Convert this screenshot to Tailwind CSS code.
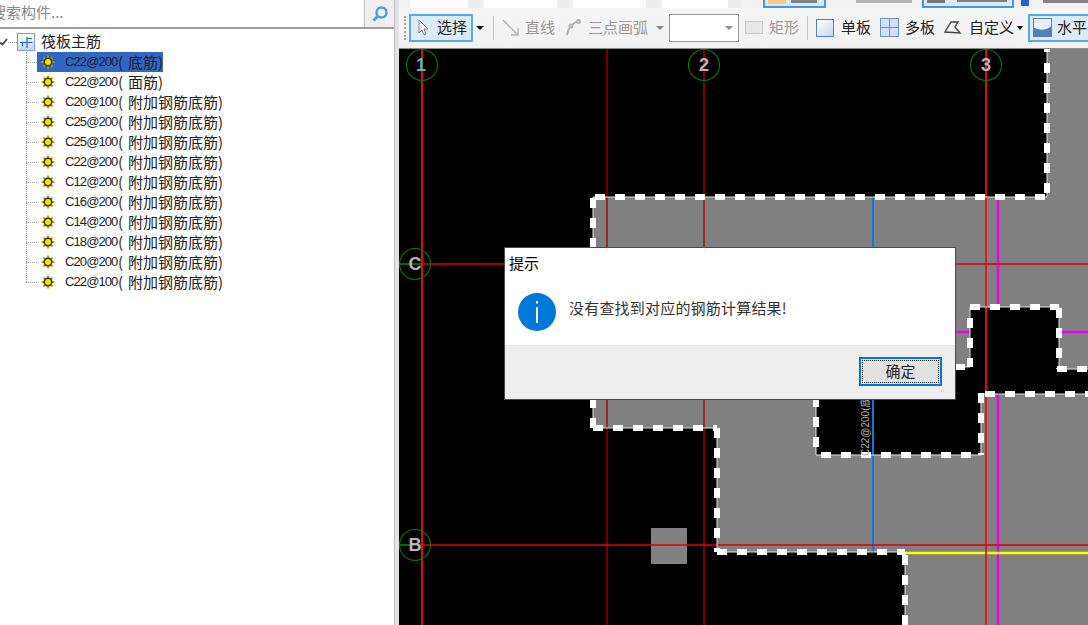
<!DOCTYPE html>
<html lang="en">
<head>
    <meta charset="UTF-8">
    <title>筏板主筋</title>
    <script src="https://cdn.jsdelivr.net/npm/@tailwindcss/browser@4"></script>
</head>
<body class="bg-white overflow-hidden font-['Noto_Sans_CJK_SC',sans-serif]">

<svg class="hidden">
    <symbol id="gear" viewBox="0 0 14 14">
        <g stroke="#b8a800" stroke-width="2">
            <path d="M7 .5v13M.5 7h13M2.500 2.500l9 9M11.500 2.500l-9 9"/>
        </g>
        <circle cx="7" cy="7" r="4.500" fill="#3a3500"/>
        <circle cx="7" cy="7" r="3" fill="#f5e400"/>
    </symbol>
</svg>

<div class="flex w-[1088px] h-[625px]">
    <!-- left panel -->
    <aside class="w-[394px] shrink-0 flex flex-col overflow-hidden">
        <div class="flex h-[29px] shrink-0 border-b-2 border-[#a0a0a0]">
            <div class="flex-1 h-[27px] overflow-hidden border-r border-[#c8c8c8] text-[15px] leading-[23px] text-[#8a8a8a] whitespace-nowrap"><span class="block -ml-[9px]">搜索构件...</span></div>
            <div class="w-[29px] bg-[#eeeeee] flex items-center justify-center">
                <svg width="18" height="18" viewBox="0 0 18 18" fill="none"><circle cx="10.500" cy="7.500" r="5" stroke="#4a9fe0" stroke-width="2.400"/><path d="M7 11l-4.500 4.500" stroke="#4a9fe0" stroke-width="3"/></svg>
            </div>
        </div>

        <div class="flex items-center h-[20px] mt-[3px] shrink-0 relative">
            <svg width="8" height="8" viewBox="0 0 8 8" fill="none"><path d="M0 4.500l2.500 2L7 1" stroke="#444" stroke-width="1.800"/></svg>
            <span class="w-[9px] border-t border-dotted border-[#999]"></span>
            <svg width="18" height="18" viewBox="0 0 18 18" fill="none">
                <defs><linearGradient id="rootFill" x1="0" y1="0" x2="0" y2="1"><stop offset="0" stop-color="#ffffff"/><stop offset="1" stop-color="#c4d6f4"/></linearGradient></defs>
                <rect x=".5" y=".5" width="17" height="17" fill="url(#rootFill)" stroke="#7f9fdc"/>
                <path d="M3 9.500h12.500M10 4v11M10 5.500h5M5.500 9.500v4" stroke="#2a62c8" stroke-width="1.200"/>
            </svg>
            <span class="ml-[6px] -mt-[3px] text-[15px] text-[#222] leading-none">筏板主筋</span>
        </div>

        <ul id="tree" class="relative ml-[26px] mt-0"></ul>
    </aside>

    <div class="w-[5px] shrink-0 bg-[#e2e2e2] border-l border-[#bdbdbd]"></div>

    <!-- right side -->
    <main class="flex-1 flex flex-col min-w-0">
        <div class="h-[49px] shrink-0 bg-[#f1f1f1] border-b border-[#8c8c8c] overflow-hidden">
            <div class="flex h-[8px] items-start text-[14px] leading-[8px]">
                <div class="ml-[11px] w-[72px] h-[8px] bg-white"><div class="ml-[58px] h-full bg-[#ededed]"></div></div>
                <div class="ml-[3px] w-[87px] h-[8px] bg-white"><div class="ml-[73px] h-full bg-[#ededed]"></div></div>
                <div class="ml-[3px] w-[87px] h-[8px] bg-white"><div class="ml-[73px] h-full bg-[#ededed]"></div></div>
                <div class="ml-[3px] w-[80px] h-[8px] bg-white"><div class="ml-[66px] h-full bg-[#ededed]"></div></div>
                <div class="ml-[22px] w-[64px] h-[8px] bg-[#dce9f5] border-x-2 border-b-2 border-[#3c9be8] flex"><span class="ml-[3px] w-[18px] h-[4px] bg-[#f8c98a]"></span><span class="ml-[5px] w-[26px] h-[3px] bg-[#555]/70"></span></div>
                <div class="ml-[30px] w-[56px] h-[3px] bg-[#8a8a8a]/60"></div>
                <div class="ml-[10px] w-[93px] h-[8px] bg-[#dce9f5] border-x-2 border-b-2 border-[#3c9be8] flex"><span class="ml-[3px] w-[18px] h-[3px] bg-[#777]"></span><span class="ml-[12px] w-[50px] h-[2px] bg-[#555]/70"></span></div>
                <div class="ml-[7px] w-[8px] h-[6px] bg-[#2a62c8]"></div>
                <div class="ml-[14px] w-[46px] h-[3px] bg-[#555]/70"></div>
            </div>

            <div class="flex items-center h-[41px] pt-[3px] pb-[5px] bg-linear-to-b from-[#f6f6f6] to-[#f1f1f1] text-[15px] text-[#222] whitespace-nowrap">
                <div class="ml-[5px] w-[3px] h-[24px] border-l-2 border-dotted border-[#aaa]"></div>
                <div class="ml-[2px] w-[64px] h-[28px] flex items-center border-2 border-[#5aa7ea] bg-[#dcebf8]">
                    <svg class="ml-[6px]" width="12" height="18" viewBox="0 0 12 18" fill="#f4f4f4" stroke="#888"><path d="M2 1v13l3-3 2 5 2-1-2-5h4z"/></svg>
                    <span class="ml-[8px]">选择</span>
                </div>
                <span class="ml-[3px] w-0 h-0 border-x-[4px] border-x-transparent border-t-[4px] border-t-[#111]"></span>
                <span class="ml-[9px] w-px h-[24px] bg-[#c4c4c4]"></span>
                <svg class="ml-[8px]" width="18" height="18" viewBox="0 0 18 18" fill="none" stroke="#b5b5b5" stroke-width="1.500"><path d="M1 1l15 15M16 9v7H9"/></svg>
                <span class="ml-[5px] text-[#9a9a9a]">直线</span>
                <svg class="ml-[10px]" width="16" height="18" viewBox="0 0 16 18" fill="none" stroke="#b5b5b5" stroke-width="2"><path d="M2 16C3 9 7 4 14 2"/><circle cx="13.500" cy="2.500" r="1.500" fill="#ccc"/><circle cx="6" cy="7" r="1.500" fill="#ccc"/></svg>
                <span class="ml-[7px] text-[#9a9a9a]">三点画弧</span>
                <span class="ml-[8px] w-0 h-0 border-x-[4px] border-x-transparent border-t-[4px] border-t-[#888]"></span>
                <div class="ml-[5px] w-[70px] h-[28px] flex items-center justify-end pr-[5px] bg-white border border-[#9a9a9a]">
                    <span class="w-0 h-0 border-x-[4px] border-x-transparent border-t-[4px] border-t-[#888]"></span>
                </div>
                <span class="ml-[6px] w-[18px] h-[13px] bg-[#e8e8e8] border border-[#c8c8c8]"></span>
                <span class="ml-[6px] text-[#9a9a9a]">矩形</span>
                <span class="ml-[8px] w-px h-[24px] bg-[#c4c4c4]"></span>
                <span class="ml-[8px] w-[18px] h-[18px] bg-linear-to-br from-white to-[#c8d8f2] border border-[#4f7fd0]"></span>
                <span class="ml-[7px]">单板</span>
                <svg class="ml-[9px]" width="19" height="19" viewBox="0 0 19 19" fill="#cfe0f4" stroke="#6e93c8"><rect x=".5" y=".5" width="18" height="18"/><path d="M9.500 0v19M0 9.500h19"/></svg>
                <span class="ml-[6px]">多板</span>
                <svg class="ml-[9px]" width="18" height="16" viewBox="0 0 18 16" fill="none" stroke="#444" stroke-width="1.400"><path d="M1 12L7 2h7l-3 5 5 6z"/></svg>
                <span class="ml-[7px]">自定义</span>
                <span class="ml-[3px] w-0 h-0 border-x-[3px] border-x-transparent border-t-[4px] border-t-[#111]"></span>
                <div class="ml-[5px] flex-1 h-[28px] flex items-center border-y-2 border-l-2 border-[#5aa7ea] bg-[#dcebf8]">
                    <svg class="ml-[3px]" width="19" height="19" viewBox="0 0 19 19" fill="#e6eef8" stroke="#5f7fae"><rect x=".5" y=".5" width="18" height="18"/><path d="M1 10c5 3 12 3 17-1v9H1z" fill="#4f7fc0"/></svg>
                    <span class="ml-[5px]">水平</span>
                </div>
            </div>
        </div>

        <!-- drawing area -->
        <div class="relative flex-1 bg-black overflow-hidden">
            <svg class="block" width="689" height="576" viewBox="399 49 689 576" fill="none">
                <rect x="651" y="528" width="36" height="36" fill="#808080"/>
                <path fill="#808080" d="M593 197H1047V49H1088V369H1059V307H970V367H816V455H981V394H1088V625H905V552H717V428H593Z"/>

                <path d="M607 49V625" stroke="#a00000" stroke-width="1.400"/>
                <path d="M704 49V625" stroke="#b00000" stroke-width="1.400"/>
                <path d="M873 197V552" stroke="#0a78e0" stroke-width="2"/>
                <path d="M998 197V307M998 394V625M955 332H970M1059 332H1088" stroke="#f000f0" stroke-width="2.500"/>
                <path d="M905 553H1088" stroke="#ffff00" stroke-width="2.500"/>
                <path d="M422 49V625M986 49V625" stroke="#f01010" stroke-width="1.800"/>
                <path d="M422 264H1088M422 545H1088" stroke="#e00000" stroke-width="1.400"/>
                <path d="M400 264H422M400 545H422" stroke="#0a800a" stroke-width="1.400"/>

                <g stroke="#e6e6e6" stroke-width="1">
                    <path d="M1047 49V197H593V428H717V552H905V625"/>
                    <path d="M1088 369H1059V307H970V367H816V455H981V394H1088"/>
                </g>
                <!-- one subpath per edge so the dashes restart at each corner -->
                <path stroke="#ffffff" stroke-width="6" stroke-dasharray="10 10" d="M1047 63V197M1047 49V52M595 197H1047M593 198V428M593 428H717M717 428V552M717 552H905M905 555V625M970 307H1059M1059 308V369M970 318V367M965 367H955M1057 369H1088M985 394H1088M981 393V455M971 455H816M816 447V399"/>

                <g stroke="#0a7a0a" stroke-width="1.100">
                    <circle cx="422" cy="65" r="15.500"/>
                    <circle cx="704" cy="65" r="15.500"/>
                    <circle cx="986" cy="65" r="15.500"/>
                    <circle cx="415" cy="264" r="15.500"/>
                    <circle cx="415" cy="545" r="15.500"/>
                </g>
                <g fill="#b8b8b8" font-size="18" font-weight="700" text-anchor="middle" font-family="'Liberation Sans',sans-serif">
                    <text x="421" y="71" fill="#6fb0c0">1</text>
                    <text x="704" y="71">2</text>
                    <text x="986" y="71">3</text>
                    <text x="415" y="270">C</text>
                    <text x="415" y="551">B</text>
                </g>
                <text transform="translate(869 456) rotate(-90)" fill="#b0b0b0" font-size="10" font-family="'Liberation Sans','Noto Sans CJK SC',sans-serif">C22@200(底筋)</text>
            </svg>

            <!-- message dialog -->
            <div class="absolute left-[105px] top-[198px] w-[452px] h-[153px] flex flex-col bg-white border border-[#4a4a4a]">
                <div class="h-[30px] pl-[4px] pt-[4px] text-[15px] leading-[22px] text-black">提示</div>
                <div class="h-[67px] flex items-start pl-[13px] pt-[15px]">
                    <svg width="38" height="38" viewBox="0 0 38 38">
                        <circle cx="19" cy="19" r="19" fill="#0078d7"/>
                        <rect x="18" y="8" width="2" height="2.500" fill="#fff"/>
                        <rect x="18" y="14" width="2" height="16" fill="#fff"/>
                    </svg>
                    <span class="ml-[13px] mt-[5px] text-[15px] leading-[20px] text-[#333] tracking-[0.2px]">没有查找到对应的钢筋计算结果!</span>
                </div>
                <div class="flex-1 flex justify-end items-start pt-[11px] pr-[13px] bg-[#eeeeee] border-t border-[#e2e2e2]">
                    <div class="w-[83px] h-[29px] border-2 border-[#0078d7] bg-[#e1e1e1] p-px">
                        <div class="w-full h-full flex items-center justify-center border border-dotted border-black text-[15px] text-[#222]">确定</div>
                    </div>
                </div>
            </div>
        </div>
    </main>
</div>

<script>
(() => {
    const items = ['C22@200|底筋', 'C22@200|面筋', 'C20@100|附加钢筋底筋', 'C25@200|附加钢筋底筋',
        'C25@100|附加钢筋底筋', 'C22@200|附加钢筋底筋', 'C12@200|附加钢筋底筋', 'C16@200|附加钢筋底筋',
        'C14@200|附加钢筋底筋', 'C18@200|附加钢筋底筋', 'C20@200|附加钢筋底筋', 'C22@100|附加钢筋底筋'];

    const tree = document.getElementById('tree');
    tree.innerHTML = '<li class="absolute left-0 top-0 bottom-[10px] border-l border-dotted border-[#999]"></li>' + items.map((item, i) => {
        const [code, note] = item.split('|');
        const bg = i === 0 ? 'bg-[#3166c4]' : '';
        return `<li class="flex items-center h-[20px]">
            <span class="w-[11px] border-t border-dotted border-[#999]"></span>
            <div class="relative flex items-center h-[20px] ${bg}">
                <svg class="ml-[4px]" width="14" height="14"><use href="#gear"/></svg>
                <span class="ml-[10px] w-[53px] text-[13px] text-[#222] font-['Liberation_Sans'] tracking-[-0.9px]">${code}</span>
                <span class="-mt-[2px] text-[15px] leading-none text-[#222] whitespace-nowrap">(<span class="ml-[5px]">${note}</span>)</span>
            </div>
        </li>`;
    }).join('');
})();
</script>
</body>
</html>
